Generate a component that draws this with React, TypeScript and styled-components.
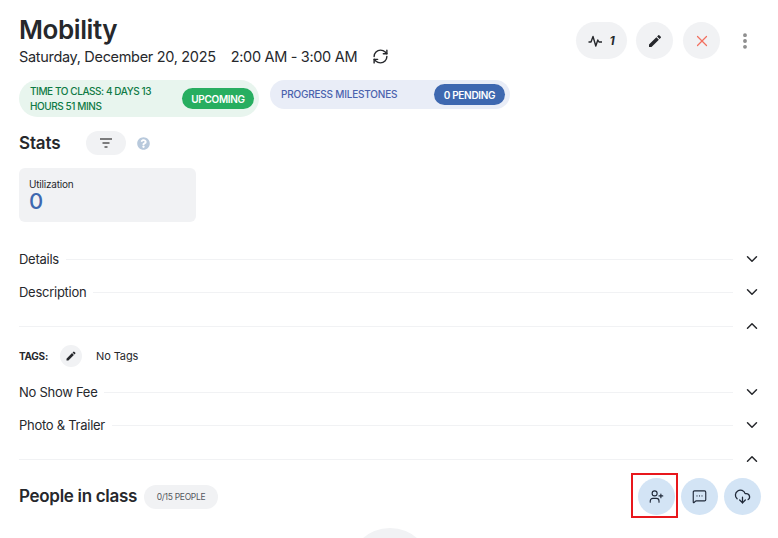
import React from "react";
import styled, { createGlobalStyle } from "styled-components";
import { ChevronDown, ChevronUp, CloudDownload, EllipsisVertical, MessageSquareMore, UserPlus, X, RefreshCw } from "lucide-react";
import { MdEdit } from "react-icons/md";
import { FaQuestionCircle } from "react-icons/fa";

const GlobalStyle = createGlobalStyle`
  html, body {
    margin: 0;
    padding: 0;
    height: 100%;
    overflow: hidden;
    background: #fff;
  }
  body {
    font-family: Inter, "Liberation Sans", sans-serif;
    color: #26282c;
  }
`;

const Page = styled.div`
  width: 778px;
  height: 538px;
  overflow: hidden;
  box-sizing: border-box;
  padding: 14px 17px 0 19px;
`;

const Header = styled.div`
  display: flex;
  justify-content: space-between;
  align-items: flex-start;
  height: 66px;
`;

const Title = styled.h1`
  margin: 0;
  font-size: 26px;
  line-height: 31px;
  font-weight: 600;
  letter-spacing: -0.42px;
`;

const DateLine = styled.div`
  display: flex;
  align-items: center;
  height: 22px;
  font-size: 14.5px;
  letter-spacing: -0.32px;
  span + span {
    margin-left: 15px;
  }
  svg {
    margin-left: 15px;
  }
`;

const Actions = styled.div`
  display: flex;
  align-items: center;
  gap: 10px;
  padding-top: 8px;
  margin-right: 6px;
`;

const ActionPill = styled.div`
  display: flex;
  align-items: center;
  justify-content: center;
  gap: 6px;
  width: 51px;
  height: 37px;
  margin-right: -1px;
  border-radius: 19px;
  background: #f1f2f4;
  font-size: 12px;
  font-weight: 700;
  font-style: italic;
`;

const ActionCircle = styled.div`
  display: flex;
  align-items: center;
  justify-content: center;
  width: 37px;
  height: 37px;
  border-radius: 50%;
  background: #f1f2f4;
`;

const MoreButton = styled.div`
  display: flex;
  margin-left: 5px;
  color: #8b8b8b;
`;

const PillRow = styled.div`
  display: flex;
  align-items: flex-start;
  gap: 11px;
`;

const StatusPill = styled.div<{ $bg: string; $height: number }>`
  box-sizing: border-box;
  display: flex;
  align-items: center;
  justify-content: space-between;
  width: 240px;
  height: ${(p) => p.$height}px;
  padding: 0 5px 0 11px;
  border-radius: 19px;
  background: ${(p) => p.$bg};
`;

const PillText = styled.div<{ $color: string; $tight?: boolean }>`
  width: ${(p) => (p.$tight ? "130px" : "auto")};
  font-size: 10px;
  line-height: 15px;
  font-weight: 500;
  letter-spacing: ${(p) => (p.$tight ? "-0.42px" : "-0.2px")};
  color: ${(p) => p.$color};
`;

const PillBadge = styled.div<{ $bg: string; $width: number }>`
  display: flex;
  align-items: center;
  justify-content: center;
  width: ${(p) => p.$width}px;
  height: 21px;
  border-radius: 11px;
  background: ${(p) => p.$bg};
  color: #fff;
  font-size: 10px;
  font-weight: 600;
  letter-spacing: -0.3px;
`;

const StatsHead = styled.div`
  display: flex;
  align-items: center;
  height: 24px;
  margin-top: 14px;
`;

const StatsTitle = styled.h2`
  margin: 0;
  width: 67px;
  font-size: 17px;
  font-weight: 600;
  letter-spacing: -0.15px;
`;

const FilterPill = styled.div`
  display: flex;
  align-items: center;
  justify-content: center;
  width: 40px;
  height: 24px;
  border-radius: 12px;
  background: #f1f2f4;
  margin-right: 11px;
`;

const HelpIcon = styled(FaQuestionCircle)`
  color: #b8c9dc;
`;

const StatCard = styled.div`
  box-sizing: border-box;
  width: 177px;
  height: 54px;
  margin-top: 13px;
  padding: 10px 10px;
  border-radius: 6px;
  background: #f1f2f4;
`;

const StatLabel = styled.div`
  font-size: 10px;
  line-height: 12px;
  letter-spacing: -0.2px;
`;

const StatValue = styled.div`
  font-size: 22px;
  line-height: 22px;
  font-weight: 500;
  color: #3e68b0;
`;

const Sections = styled.div`
  margin-top: 21px;
`;

const SectionRow = styled.div<{ $height: number }>`
  display: flex;
  align-items: center;
  height: ${(p) => p.$height}px;
`;

const SectionLabel = styled.span`
  font-size: 13px;
  letter-spacing: -0.27px;
  margin-right: 7px;
  padding-bottom: 2px;
`;

const SectionLine = styled.div`
  flex: 1;
  height: 1px;
  background: #f1f2f4;
`;

const SectionChevron = styled.div`
  display: flex;
  width: 18px;
  margin-left: 10px;
  padding-bottom: 2px;
`;

const TagsRow = styled.div`
  display: flex;
  align-items: center;
  height: 24px;
  margin-bottom: 8px;
`;

const TagsLabel = styled.span`
  width: 41px;
  font-size: 10px;
  font-weight: 700;
  letter-spacing: -0.25px;
`;

const TagsEdit = styled.div`
  display: flex;
  align-items: center;
  justify-content: center;
  width: 22px;
  height: 22px;
  border-radius: 50%;
  background: #f1f2f4;
  margin-right: 14px;
`;

const TagsText = styled.span`
  font-size: 11px;
  letter-spacing: -0.1px;
`;

const PeopleHead = styled.div`
  display: flex;
  align-items: center;
  justify-content: space-between;
  height: 37px;
  margin-top: 1px;
`;

const PeopleLeft = styled.div`
  display: flex;
  align-items: center;
  gap: 7px;
`;

const PeopleTitle = styled.h2`
  margin: 0;
  padding-bottom: 2px;
  font-size: 17px;
  font-weight: 600;
  letter-spacing: -0.3px;
`;

const CountPill = styled.div`
  display: flex;
  align-items: center;
  justify-content: center;
  width: 74px;
  height: 24px;
  border-radius: 12px;
  background: #f1f2f4;
  font-size: 8.5px;
  letter-spacing: -0.3px;
  color: #55585e;
`;

const PeopleActions = styled.div`
  display: flex;
  gap: 6px;
`;

const BlueCircle = styled.div`
  position: relative;
  display: flex;
  align-items: center;
  justify-content: center;
  width: 37px;
  height: 37px;
  border-radius: 50%;
  background: #d3e4f5;
  color: #1f2838;
`;

const Highlight = styled.div`
  position: absolute;
  left: -7px;
  top: -5px;
  width: 47px;
  height: 45px;
  box-sizing: border-box;
  border: 2px solid #e8171c;
`;

const EmptyAvatar = styled.div`
  width: 82px;
  height: 82px;
  margin: 13px 0 0 330px;
  border-radius: 50%;
  background: #f1f2f4;
`;

const FilterIcon = () => (
  <svg width="14" height="12" viewBox="0 0 14 12" fill="none" stroke="#555" strokeWidth="1.4">
    <path d="M1 2h12M3.5 6h7M5.5 10h3" />
  </svg>
);

const PulseIcon = () => (
  <svg width="15" height="14" viewBox="0 0 15 14" fill="none" stroke="#26282c" strokeWidth="1.4" strokeLinejoin="round">
    <path d="M0.5 8H3L5 2.5L7.8 12L9.8 6L11 8H14" />
  </svg>
);

const Section = ({ label, open, height }: { label?: string; open?: boolean; height: number }) => (
  <SectionRow $height={height}>
    {label && <SectionLabel>{label}</SectionLabel>}
    <SectionLine />
    <SectionChevron>
      {open ? <ChevronUp size={18} strokeWidth={2} /> : <ChevronDown size={18} strokeWidth={2} />}
    </SectionChevron>
  </SectionRow>
);

export default function App() {
  return (
    <Page>
      <GlobalStyle />
      <Header>
        <div>
          <Title>Mobility</Title>
          <DateLine>
            <span>Saturday, December 20, 2025</span>
            <span>2:00 AM - 3:00 AM</span>
            <RefreshCw size={17} strokeWidth={2} />
          </DateLine>
        </div>
        <Actions>
          <ActionPill>
            <PulseIcon />1
          </ActionPill>
          <ActionCircle>
            <MdEdit size={16} />
          </ActionCircle>
          <ActionCircle>
            <X size={18} strokeWidth={1.6} color="#f2705f" />
          </ActionCircle>
          <MoreButton>
            <EllipsisVertical size={20} strokeWidth={2.6} />
          </MoreButton>
        </Actions>
      </Header>
      <PillRow>
        <StatusPill $bg="#e8f5ee" $height={37}>
          <PillText $color="#0f7a45" $tight>TIME TO CLASS: 4 DAYS 13 HOURS 51 MINS</PillText>
          <PillBadge $bg="#27ae60" $width={72}>UPCOMING</PillBadge>
        </StatusPill>
        <StatusPill $bg="#e9edf7" $height={29}>
          <PillText $color="#4a62ad">PROGRESS MILESTONES</PillText>
          <PillBadge $bg="#3e68b0" $width={71}>0 PENDING</PillBadge>
        </StatusPill>
      </PillRow>
      <StatsHead>
        <StatsTitle>Stats</StatsTitle>
        <FilterPill>
          <FilterIcon />
        </FilterPill>
        <HelpIcon size={13} />
      </StatsHead>
      <StatCard>
        <StatLabel>Utilization</StatLabel>
        <StatValue>0</StatValue>
      </StatCard>
      <Sections>
        <Section label="Details" height={33} />
        <Section label="Description" height={33} />
        <Section height={35} open />
        <TagsRow>
          <TagsLabel>TAGS:</TagsLabel>
          <TagsEdit>
            <MdEdit size={12} />
          </TagsEdit>
          <TagsText>No Tags</TagsText>
        </TagsRow>
        <Section label="No Show Fee" height={33} />
        <Section label="Photo & Trailer" height={33} />
        <Section height={35} open />
      </Sections>
      <PeopleHead>
        <PeopleLeft>
          <PeopleTitle>People in class</PeopleTitle>
          <CountPill>0/15 PEOPLE</CountPill>
        </PeopleLeft>
        <PeopleActions>
          <BlueCircle>
            <UserPlus size={15} strokeWidth={1.8} />
            <Highlight />
          </BlueCircle>
          <BlueCircle>
            <MessageSquareMore size={15} strokeWidth={1.8} />
          </BlueCircle>
          <BlueCircle>
            <CloudDownload size={17} strokeWidth={1.8} />
          </BlueCircle>
        </PeopleActions>
      </PeopleHead>
      <EmptyAvatar />
    </Page>
  );
}
